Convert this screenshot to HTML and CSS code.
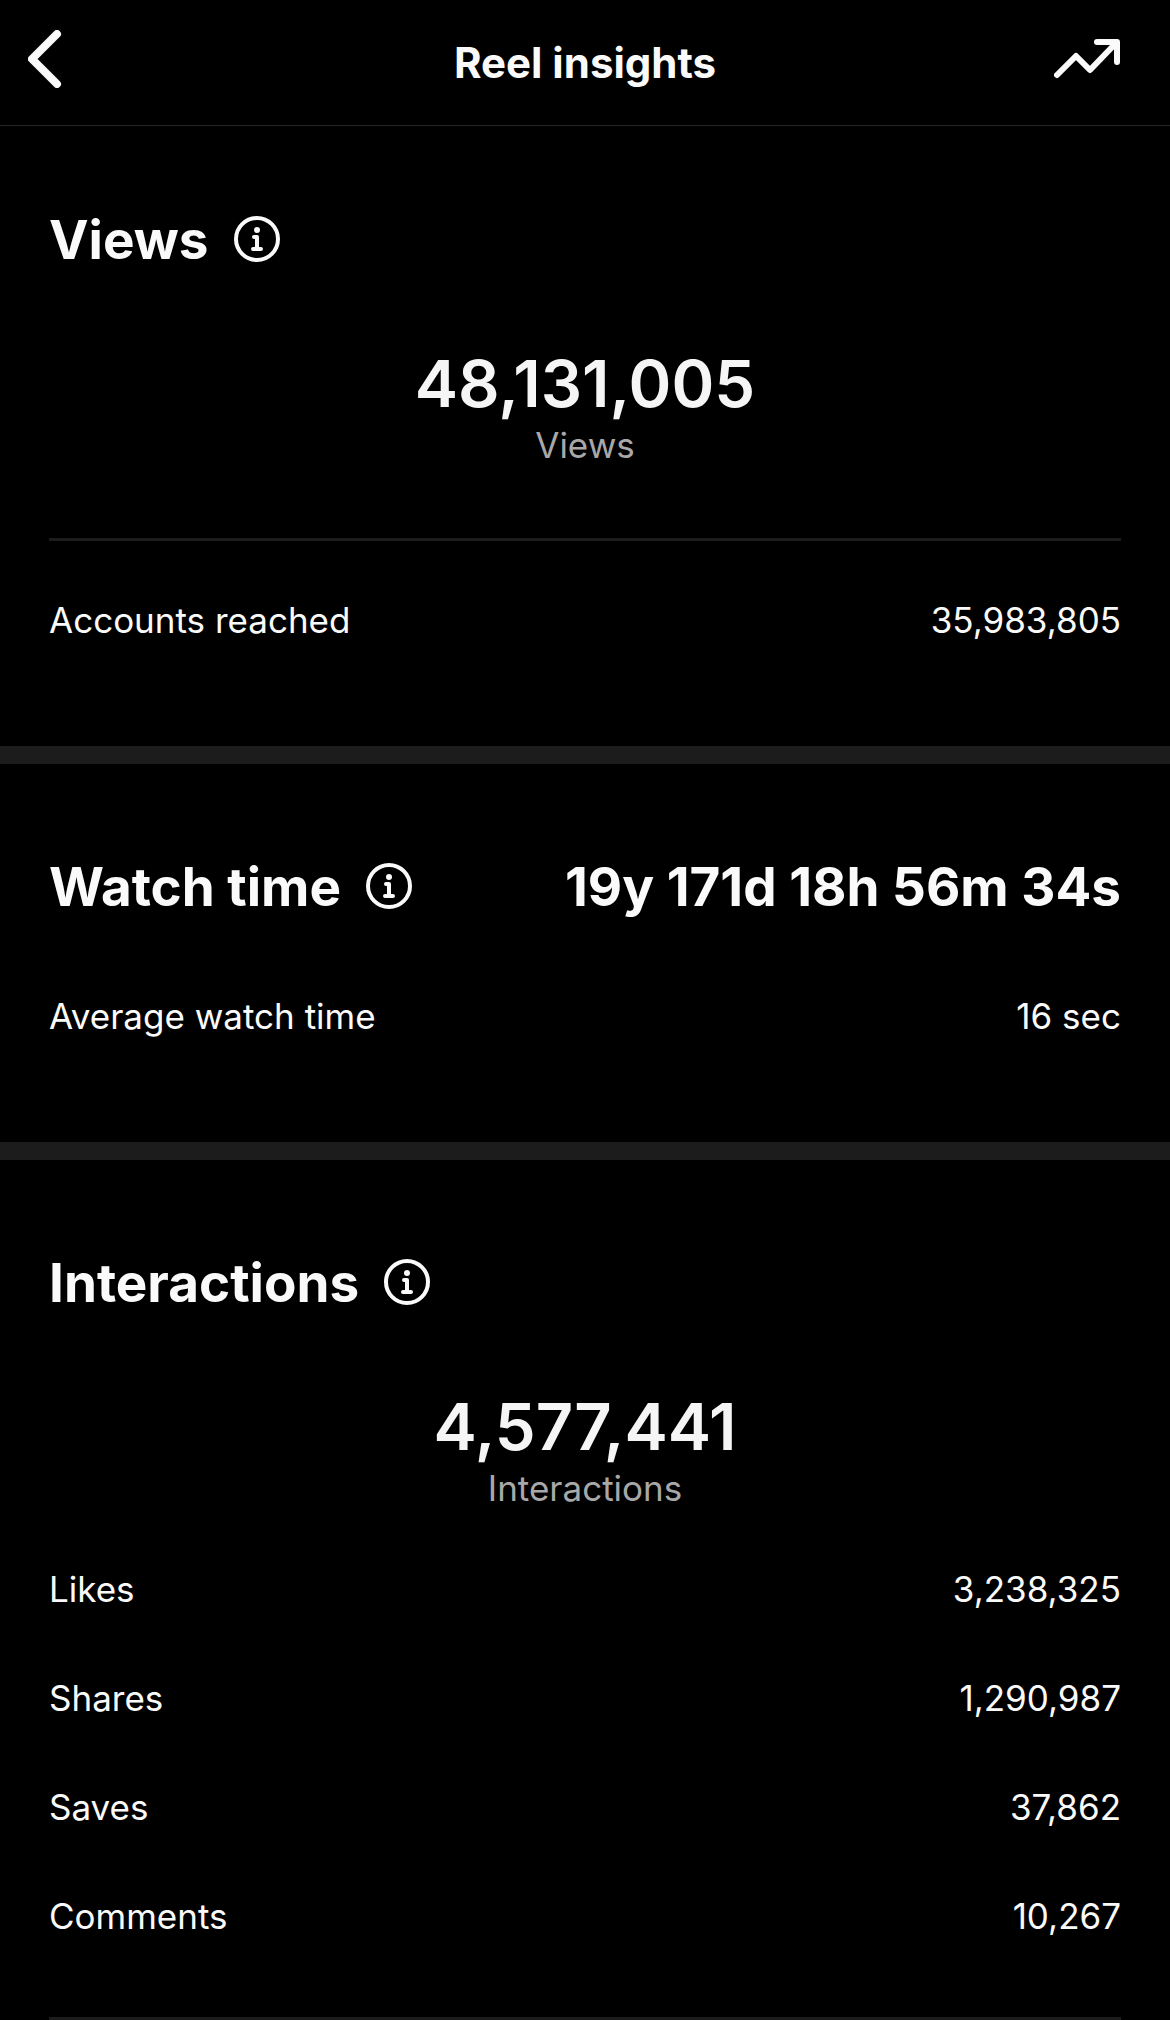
FILE: index.html
```
<!DOCTYPE html>
<html lang="en">
<head>
    <meta charset="UTF-8">
    <meta name="viewport" content="width=device-width, initial-scale=1.0">
    <title>Reel insights</title>
    <link rel="stylesheet" href="styles.css">
</head>
<body>
    <!-- Top bar -->
    <header class="top-bar">
        <button class="icon-button" type="button" aria-label="Back">
            <svg class="back-icon" viewBox="0 0 34 58" aria-hidden="true">
                <path d="M29 4 L4 29 L29 54"/>
            </svg>
        </button>
        <h1 class="page-title">Reel insights</h1>
        <button class="icon-button icon-button-right" type="button" aria-label="Boost reel">
            <svg class="trend-icon" viewBox="0 0 66 40" aria-hidden="true">
                <path d="M3 36 L22 17 L36 31 L62 4"/>
                <path d="M43 3 H63 V23"/>
            </svg>
        </button>
    </header>

    <main>
        <!-- Views -->
        <section class="section section-first">
            <div class="section-header">
                <h2>Views</h2>
                <button class="icon-button" type="button" aria-label="About views">
                    <svg class="info-icon" viewBox="0 0 46 46" aria-hidden="true">
                        <circle cx="23" cy="23" r="21"/>
                        <circle class="info-dot" cx="23" cy="14" r="3"/>
                        <path d="M20 21 H23 V32 M19 33 H27"/>
                    </svg>
                </button>
            </div>
            <div class="total">
                <p class="total-number">48,131,005</p>
                <p class="total-label">Views</p>
            </div>
            <hr class="divider">
            <dl class="stats">
                <div class="stat-row"><dt>Accounts reached</dt><dd>35,983,805</dd></div>
            </dl>
        </section>

        <!-- Watch time -->
        <section class="section">
            <div class="section-header">
                <h2>Watch time</h2>
                <button class="icon-button" type="button" aria-label="About watch time">
                    <svg class="info-icon" viewBox="0 0 46 46" aria-hidden="true">
                        <circle cx="23" cy="23" r="21"/>
                        <circle class="info-dot" cx="23" cy="14" r="3"/>
                        <path d="M20 21 H23 V32 M19 33 H27"/>
                    </svg>
                </button>
                <p class="section-value">19y 171d 18h 56m 34s</p>
            </div>
            <dl class="stats stats-watch">
                <div class="stat-row"><dt>Average watch time</dt><dd>16 sec</dd></div>
            </dl>
        </section>

        <!-- Interactions -->
        <section class="section section-last">
            <div class="section-header">
                <h2>Interactions</h2>
                <button class="icon-button" type="button" aria-label="About interactions">
                    <svg class="info-icon" viewBox="0 0 46 46" aria-hidden="true">
                        <circle cx="23" cy="23" r="21"/>
                        <circle class="info-dot" cx="23" cy="14" r="3"/>
                        <path d="M20 21 H23 V32 M19 33 H27"/>
                    </svg>
                </button>
            </div>
            <div class="total">
                <p class="total-number">4,577,441</p>
                <p class="total-label">Interactions</p>
            </div>
            <dl class="stats">
                <div class="stat-row"><dt>Likes</dt><dd>3,238,325</dd></div>
                <div class="stat-row"><dt>Shares</dt><dd>1,290,987</dd></div>
                <div class="stat-row"><dt>Saves</dt><dd>37,862</dd></div>
                <div class="stat-row"><dt>Comments</dt><dd>10,267</dd></div>
            </dl>
            <hr class="divider divider-end">
        </section>
    </main>
</body>
</html>
```
FILE: styles.css
```
* {
    margin: 0;
    padding: 0;
    box-sizing: border-box;
}

body {
    font-family: Inter, "Liberation Sans", sans-serif;
    font-size: 35px;
    line-height: 44px;
    background-color: #000;
    color: #fafafa;
}

/* Top bar */
.top-bar {
    display: grid;
    grid-template-columns: 1fr auto 1fr;
    align-items: center;
    height: 126px;
    border-bottom: 1px solid #262626;
}

.page-title {
    font-size: 42px;
    line-height: 52px;
    font-weight: 700;
}

.icon-button {
    display: flex;
    padding-bottom: 2px;
    background: none;
    border: none;
    color: inherit;
    cursor: pointer;
}

.top-bar .icon-button {
    padding: 0 50px 8px 28px;
}

.icon-button-right {
    justify-self: end;
}

.icon-button svg {
    fill: none;
    stroke: currentColor;
    stroke-linecap: round;
    stroke-linejoin: round;
}

.back-icon {
    width: 34px;
    height: 58px;
    stroke-width: 8;
}

.trend-icon {
    width: 66px;
    height: 40px;
    stroke-width: 6;
}

.info-icon {
    width: 46px;
    height: 46px;
    stroke-width: 4;
}

.icon-button .info-dot {
    fill: currentColor;
    stroke: none;
}

/* Sections */
.section {
    padding: 91px 49px 72px;
    border-bottom: 18px solid #1c1c1c;
}

.section-first {
    padding-top: 82px;
}

.section-last {
    padding-bottom: 0;
    border-bottom: none;
}

.section-header {
    display: flex;
    align-items: center;
    gap: 25px;
}

h2,
.section-value {
    font-size: 53px;
    line-height: 64px;
    font-weight: 700;
}

.section-value {
    margin-left: auto;
}

/* Big centered number */
.total {
    margin-top: 76px;
    text-align: center;
}

.total-number {
    font-size: 65px;
    line-height: 72px;
    font-weight: 600;
    color: #f5f5f5;
}

.total-label {
    margin-top: 3px;
    color: #a8a8a8;
}

.divider {
    height: 3px;
    margin-top: 71px;
    border: none;
    background-color: #1c1c1c;
}

.divider-end {
    margin-top: 47px;
}

/* Label and value rows */
.stats {
    margin-top: 24px;
}

.stats-watch {
    margin-top: 42px;
}

.stat-row {
    display: flex;
    justify-content: space-between;
    align-items: center;
    height: 109px;
}
```
